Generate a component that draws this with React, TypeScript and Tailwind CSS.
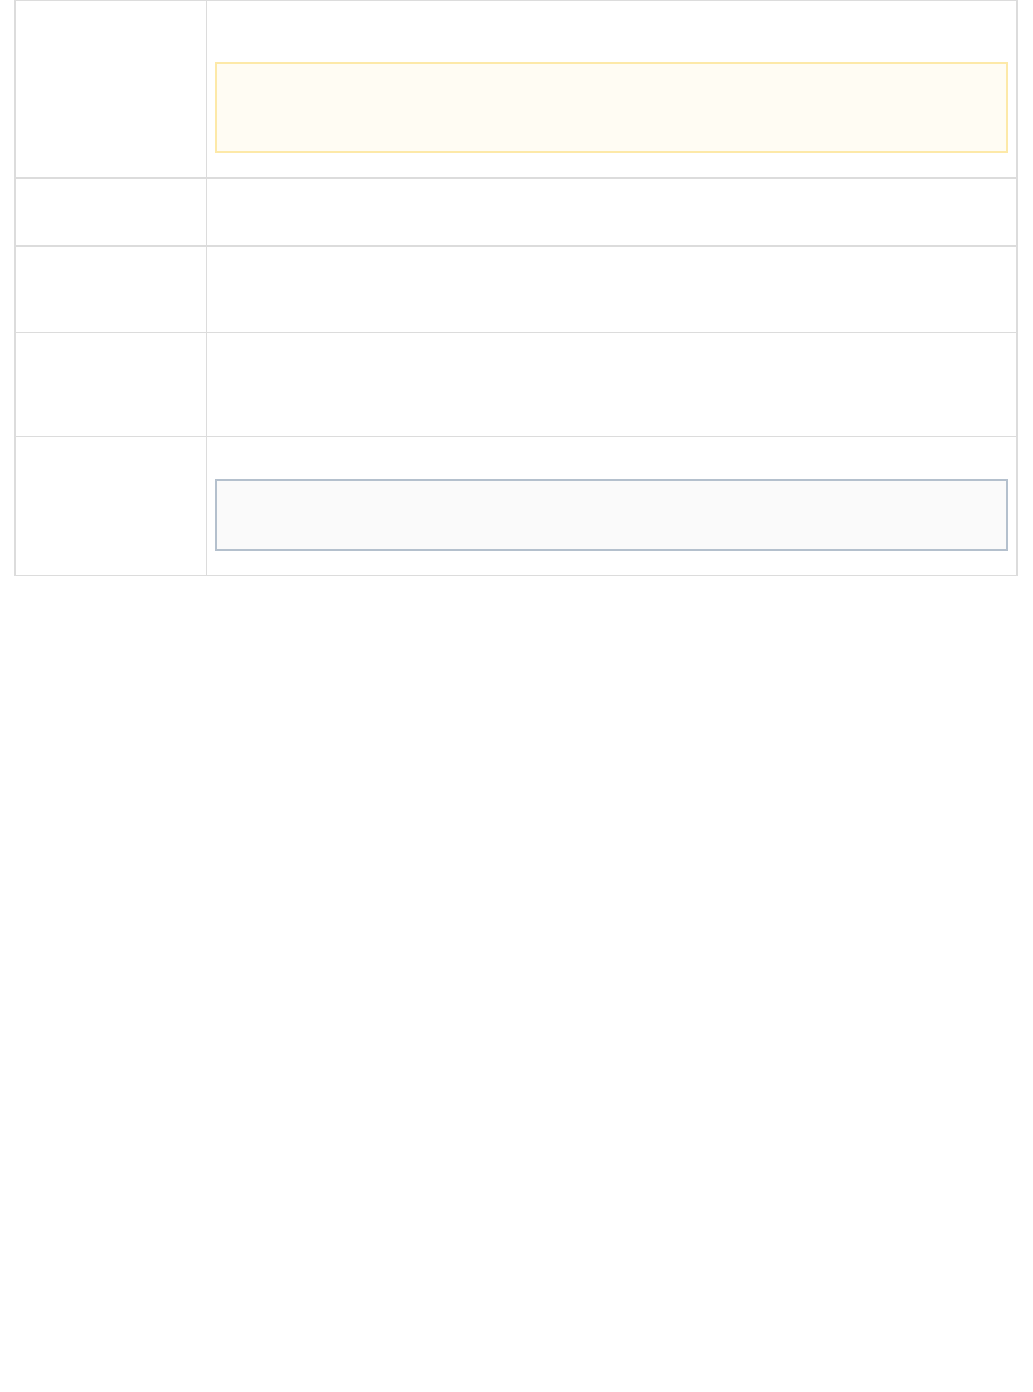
export default function App() {
  return (
    <div className="min-h-[1392px] bg-white" style={{ fontFamily: '"Liberation Sans", Arial, sans-serif' }}>
      <div className="ml-[14px] w-[1004px] border-t border-l-2 border-r-2 border-[#dcdcdc]">
        <div className="flex h-[178px] border-b-2 border-[#dcdcdc]">
          <div className="w-[191px] shrink-0 border-r border-[#dcdcdc]" />
          <div className="flex-1 px-2 pt-[61px]">
            <div className="h-[91px] border-2 border-[#fde9a8] bg-[#fffcf3]" />
          </div>
        </div>
        <div className="flex h-[68px] border-b-2 border-[#dcdcdc]">
          <div className="w-[191px] shrink-0 border-r border-[#dcdcdc]" />
          <div className="flex-1" />
        </div>
        <div className="flex h-[86px] border-b border-[#dcdcdc]">
          <div className="w-[191px] shrink-0 border-r border-[#dcdcdc]" />
          <div className="flex-1" />
        </div>
        <div className="flex h-[104px] border-b border-[#dcdcdc]">
          <div className="w-[191px] shrink-0 border-r border-[#dcdcdc]" />
          <div className="flex-1" />
        </div>
        <div className="flex h-[139px] border-b border-[#dcdcdc]">
          <div className="w-[191px] shrink-0 border-r border-[#dcdcdc]" />
          <div className="flex-1 px-2 pt-[42px]">
            <div className="h-[72px] border-2 border-[#b4c0cd] bg-[#fafafa]" />
          </div>
        </div>
      </div>
    </div>
  );
}
